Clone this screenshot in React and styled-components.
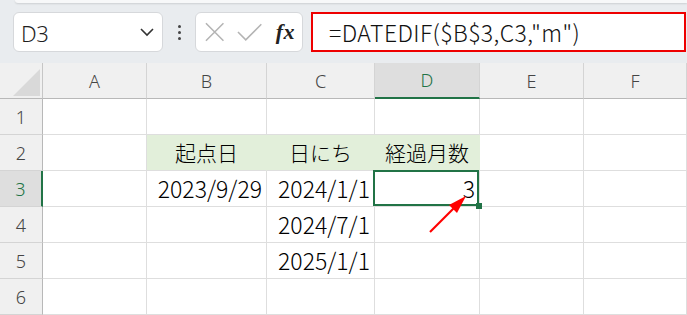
import styled, { createGlobalStyle, css } from 'styled-components';

const GlobalStyle = createGlobalStyle`
  html, body {
    margin: 0;
    padding: 0;
    background: #ffffff;
    overflow: hidden;
  }
  body {
    font-family: "Noto Sans CJK JP", "Noto Sans", sans-serif;
  }
`;

const columns = ['A', 'B', 'C', 'D', 'E', 'F'];

const rows = [
  { no: 1, cells: ['', '', '', '', '', ''] },
  { no: 2, cells: ['', '起点日', '日にち', '経過月数', '', ''], header: true },
  { no: 3, cells: ['', '2023/9/29', '2024/1/1', '3', '', ''] },
  { no: 4, cells: ['', '', '2024/7/1', '', '', ''] },
  { no: 5, cells: ['', '', '2025/1/1', '', '', ''] },
  { no: 6, cells: ['', '', '', '', '', ''] },
];

export default function App() {
  return (
    <>
      <GlobalStyle />
      <Page>
        <TopBar>
          <RibbonEdge />
          <FormulaRow>
            <NameBox>
              <span>D3</span>
              <svg width="16" height="10" viewBox="0 0 16 10">
                <path d="M2 2 L8 8 L14 2" fill="none" stroke="#333" strokeWidth="1.6" />
              </svg>
            </NameBox>
            <Dots>
              <i />
              <i />
              <i />
            </Dots>
            <FxBox>
              <svg width="22" height="20" viewBox="0 0 22 20">
                <path d="M2 1 L20 19 M20 1 L2 19" stroke="#b4b4b4" strokeWidth="1.6" fill="none" />
              </svg>
              <svg width="26" height="20" viewBox="0 0 26 20">
                <path d="M1 10 L9 18 L25 2" stroke="#b4b4b4" strokeWidth="1.6" fill="none" />
              </svg>
              <Fx>fx</Fx>
            </FxBox>
            <FormulaInput>=DATEDIF($B$3,C3,"m")</FormulaInput>
          </FormulaRow>
        </TopBar>

        <Sheet>
          <Corner>
            <CornerTriangle />
          </Corner>
          {columns.map((c) => (
            <ColHeader key={c} $active={c === 'D'}>
              {c}
            </ColHeader>
          ))}
          {rows.map((r) => (
            <Row key={r.no} r={r} />
          ))}
          <Arrow width="60" height="60" viewBox="0 0 60 60">
            <line x1="3" y1="55" x2="28" y2="30" stroke="#ff0000" strokeWidth="2.2" />
            <polygon points="39,19 22,28 30,36" fill="#ff0000" />
          </Arrow>
        </Sheet>
      </Page>
    </>
  );
}

function Row({ r }) {
  return (
    <>
      <RowHeader $active={r.no === 3}>{r.no}</RowHeader>
      {r.cells.map((v, i) => {
        const fill = r.header && i >= 1 && i <= 3;
        const selected = r.no === 3 && i === 3;
        return (
          <Cell key={i} $fill={fill} $center={r.header} $selected={selected}>
            {v}
            {selected && <FillHandle />}
          </Cell>
        );
      })}
    </>
  );
}

const Page = styled.div`
  width: 687px;
  height: 315px;
  overflow: hidden;
`;

const TopBar = styled.div`
  height: 63px;
  background: #e9ecef;
  display: flex;
  flex-direction: column;
`;

const RibbonEdge = styled.div`
  height: 3px;
  margin-left: 15px;
  background: #f7f8f9;
  border-bottom-left-radius: 6px;
  box-shadow: 0 1px 2px rgba(0, 0, 0, 0.12);
`;

const FormulaRow = styled.div`
  display: flex;
  align-items: center;
  height: 40px;
  margin-top: 9px;
  padding-left: 13px;
  padding-right: 1px;
`;

const NameBox = styled.div`
  box-sizing: border-box;
  width: 150px;
  height: 40px;
  background: #fff;
  border: 1px solid #d6d8db;
  border-radius: 6px;
  display: flex;
  align-items: center;
  justify-content: space-between;
  padding: 0 7px 0 7px;
  font-family: "Noto Sans", "Liberation Sans", sans-serif;
  font-weight: 300;
  font-size: 22px;
  letter-spacing: -0.5px;
  color: #1f1f1f;
  span {
    padding-top: 1px;
  }
`;

const Dots = styled.div`
  width: 32px;
  display: flex;
  flex-direction: column;
  align-items: center;
  gap: 3px;
  i {
    display: block;
    width: 3px;
    height: 3px;
    border-radius: 50%;
    background: #444;
  }
`;

const FxBox = styled.div`
  box-sizing: border-box;
  width: 108px;
  height: 40px;
  background: #fff;
  border: 1px solid #d6d8db;
  border-radius: 6px;
  display: flex;
  align-items: center;
  padding: 0 7px 0 8px;
  gap: 14px;
  svg + svg {
    margin-left: -2px;
  }
`;

const Fx = styled.span`
  font-family: "Liberation Serif", "DejaVu Serif", serif;
  font-style: italic;
  font-weight: bold;
  font-size: 22px;
  color: #222;
  margin-left: -1px;
  letter-spacing: 0.5px;
`;

const FormulaInput = styled.div`
  box-sizing: border-box;
  flex: 1;
  height: 40px;
  margin-left: 8px;
  background: #fff;
  border: 2px solid #ee0000;
  display: flex;
  align-items: center;
  padding-left: 16px;
  font-family: "Noto Sans CJK JP", "Noto Sans", sans-serif;
  font-weight: 300;
  font-size: 23px;
  color: #111;
  letter-spacing: 0.4px;
`;

const Sheet = styled.div`
  position: relative;
  display: grid;
  grid-template-columns: 43px 104px 120px 108px 105px 104px 1fr;
  grid-auto-rows: 36px;
`;

const headerBase = css`
  box-sizing: border-box;
  background: #f0f0f0;
  color: #444;
  font-family: "Noto Sans", "Liberation Sans", sans-serif;
  font-weight: 300;
  font-size: 18px;
  display: flex;
  align-items: center;
  justify-content: center;
`;

const Corner = styled.div`
  ${headerBase};
  border-right: 1px solid #c6c6c6;
  border-bottom: 1px solid #b8b8b8;
  align-items: flex-end;
  justify-content: flex-end;
  padding: 0 2px 2px 0;
`;

const CornerTriangle = styled.div`
  width: 27px;
  height: 27px;
  background: #d9d9d9;
  clip-path: polygon(100% 0, 100% 100%, 0 100%);
`;

const ColHeader = styled.div`
  ${headerBase};
  border-right: 1px solid #d4d4d4;
  border-bottom: 1px solid #b8b8b8;
  ${(p) =>
    p.$active &&
    css`
      background: #dedede;
      color: #217346;
      border-bottom: 2px solid #217346;
    `}
`;

const RowHeader = styled.div`
  ${headerBase};
  border-right: 1px solid #b8b8b8;
  border-bottom: 1px solid #d4d4d4;
  ${(p) =>
    p.$active &&
    css`
      background: #dedede;
      color: #217346;
      border-right: 2px solid #217346;
    `}
`;

const Cell = styled.div`
  box-sizing: border-box;
  position: relative;
  border-right: 1px solid ${(p) => (p.$fill ? '#e2efda' : '#dedede')};
  border-bottom: 1px solid #dedede;
  background: ${(p) => (p.$fill ? '#e2efda' : '#fff')};
  font-family: "Noto Sans CJK JP", "Noto Sans", sans-serif;
  font-weight: 300;
  font-size: ${(p) => (p.$center ? '21px' : '23px')};
  line-height: 1;
  color: #000;
  display: flex;
  align-items: flex-end;
  justify-content: ${(p) => (p.$center ? 'center' : 'flex-end')};
  padding: 0 4px 6px 0;
  white-space: nowrap;
  ${(p) =>
    p.$center &&
    css`
      padding-right: 0;
      padding-bottom: 7px;
    `}
  ${(p) =>
    p.$selected &&
    css`
      &::after {
        content: '';
        position: absolute;
        top: -1px;
        left: -2px;
        right: 0;
        bottom: 0;
        border: 2px solid #217346;
      }
    `}
`;

const FillHandle = styled.span`
  position: absolute;
  right: -3px;
  bottom: -3px;
  width: 6px;
  height: 6px;
  background: #217346;
  z-index: 2;
`;

const Arrow = styled.svg`
  position: absolute;
  left: 427px;
  top: 114px;
  pointer-events: none;
`;
